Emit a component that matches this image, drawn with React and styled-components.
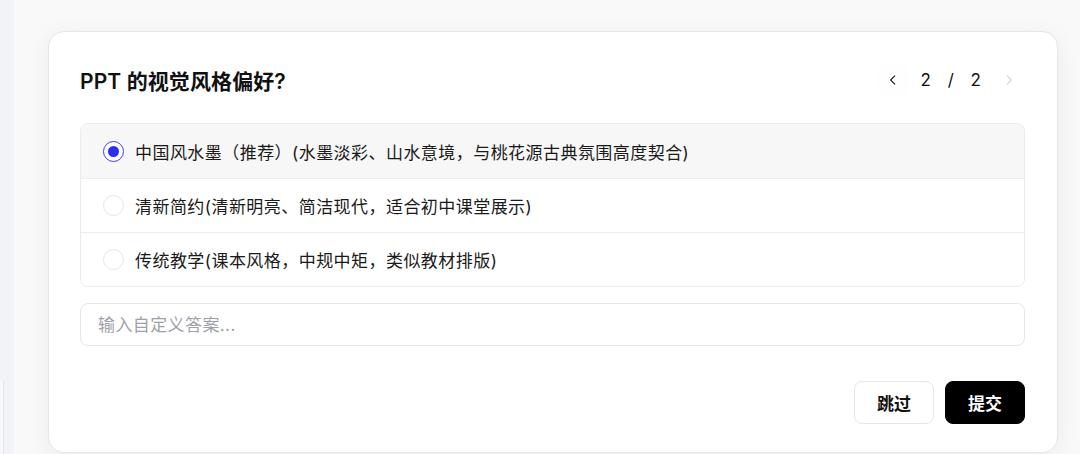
import React, { useState } from "react";
import styled, { createGlobalStyle } from "styled-components";

const GlobalStyle = createGlobalStyle`
  html, body {
    margin: 0;
    padding: 0;
    background: #f9f9f9;
    font-family: Inter, "Noto Sans CJK SC", sans-serif;
    color: #111;
  }
  * { box-sizing: border-box; }
`;

const Page = styled.div`
  display: flex;
  width: 1080px;
  height: 454px;
  overflow: hidden;
`;

const SideRail = styled.div`
  width: 14px;
  flex: none;
  background: #f2f3f9;
  display: flex;
  flex-direction: column;
  justify-content: flex-end;
`;

const RailEdge = styled.div`
  height: 74px;
  width: 4px;
  border-right: 1px solid #e3e5ee;
  background: #f7f8fc;
`;

const Main = styled.div`
  flex: 1;
  padding: 31px 0 0 34px;
`;

const Card = styled.div`
  width: 1010px;
  background: #fff;
  border: 1px solid #e6e6e6;
  border-radius: 16px;
  box-shadow: 0 4px 24px rgba(0, 0, 0, 0.06);
  padding: 31px 32px 28px 31px;
  display: flex;
  flex-direction: column;
`;

const Header = styled.div`
  display: flex;
  align-items: center;
  justify-content: space-between;
  height: 34px;
  margin-bottom: 26px;
`;

const Title = styled.h2`
  margin: 0;
  font-size: 21px;
  font-weight: 600;
  color: #111;
  letter-spacing: 0.1px;
`;

const Pager = styled.div`
  display: flex;
  align-items: center;
  gap: 12px;
`;

const PagerButton = styled.button`
  width: 32px;
  height: 32px;
  border: none;
  border-radius: 6px;
  padding: 0;
  background: ${(p) => (p.disabled ? "transparent" : "#fefefe")};
  color: ${(p) => (p.disabled ? "#d4d4d4" : "#222")};
  display: flex;
  align-items: center;
  justify-content: center;
  cursor: pointer;
`;

const PagerText = styled.span`
  font-size: 17px;
  color: #111;
  word-spacing: 12px;
`;

const OptionList = styled.div`
  border: 1px solid #ebebeb;
  border-radius: 8px;
  overflow: hidden;
`;

const OptionRow = styled.label`
  display: flex;
  align-items: center;
  gap: 11px;
  height: 54px;
  padding-left: 22px;
  background: ${(p) => (p.$selected ? "#f7f7f7" : "#fff")};
  border-top: ${(p) => (p.$first ? "none" : "1px solid #ececec")};
  cursor: pointer;
`;

const Radio = styled.span`
  width: 21px;
  height: 21px;
  flex: none;
  border-radius: 50%;
  border: 1.5px solid ${(p) => (p.$checked ? "#3c3cf2" : "#e4e4e4")};
  background: #fff;
  display: flex;
  align-items: center;
  justify-content: center;
  &::after {
    content: "";
    width: 11px;
    height: 11px;
    border-radius: 50%;
    background: ${(p) => (p.$checked ? "#2d2df0" : "transparent")};
  }
`;

const OptionText = styled.span`
  font-size: 17px;
  color: #1a1a1a;
  letter-spacing: 0.45px;
`;

const CustomInput = styled.input`
  margin-top: 16px;
  height: 43px;
  border: 1px solid #e6e6e6;
  border-radius: 8px;
  padding: 0 17px;
  font-family: inherit;
  font-size: 17px;
  color: #111;
  outline: none;
  &::placeholder {
    color: #9ea1ab;
    letter-spacing: 0.4px;
  }
`;

const Actions = styled.div`
  display: flex;
  justify-content: flex-end;
  gap: 11px;
  margin-top: 35px;
`;

const ActionButton = styled.button`
  width: 80px;
  height: 43px;
  border-radius: 8px;
  font-family: inherit;
  font-size: 17px;
  font-weight: 600;
  border: 1px solid ${(p) => (p.$primary ? "#000" : "#e6e6e6")};
  background: ${(p) => (p.$primary ? "#000" : "#fff")};
  color: ${(p) => (p.$primary ? "#fff" : "#111")};
  cursor: pointer;
`;

const Chevron = ({ dir }) => (
  <svg width="14" height="14" viewBox="0 0 24 24" fill="none" stroke="currentColor" strokeWidth="2" strokeLinecap="round" strokeLinejoin="round">
    {dir === "left" ? <path d="M15 5 8 12l7 7" /> : <path d="m9 5 7 7-7 7" />}
  </svg>
);

const options = [
  "中国风水墨（推荐）(水墨淡彩、山水意境，与桃花源古典氛围高度契合)",
  "清新简约(清新明亮、简洁现代，适合初中课堂展示)",
  "传统教学(课本风格，中规中矩，类似教材排版)",
];

export default function App() {
  const [selected, setSelected] = useState(0);

  return (
    <>
      <GlobalStyle />
      <Page>
        <SideRail>
          <RailEdge />
        </SideRail>
        <Main>
          <Card>
            <Header>
              <Title>PPT 的视觉风格偏好?</Title>
              <Pager>
                <PagerButton>
                  <Chevron dir="left" />
                </PagerButton>
                <PagerText>2 / 2</PagerText>
                <PagerButton disabled>
                  <Chevron dir="right" />
                </PagerButton>
              </Pager>
            </Header>
            <OptionList>
              {options.map((text, i) => (
                <OptionRow
                  key={text}
                  $first={i === 0}
                  $selected={selected === i}
                  onClick={() => setSelected(i)}
                >
                  <Radio $checked={selected === i} />
                  <OptionText>{text}</OptionText>
                </OptionRow>
              ))}
            </OptionList>
            <CustomInput placeholder="输入自定义答案..." />
            <Actions>
              <ActionButton>跳过</ActionButton>
              <ActionButton $primary>提交</ActionButton>
            </Actions>
          </Card>
        </Main>
      </Page>
    </>
  );
}
